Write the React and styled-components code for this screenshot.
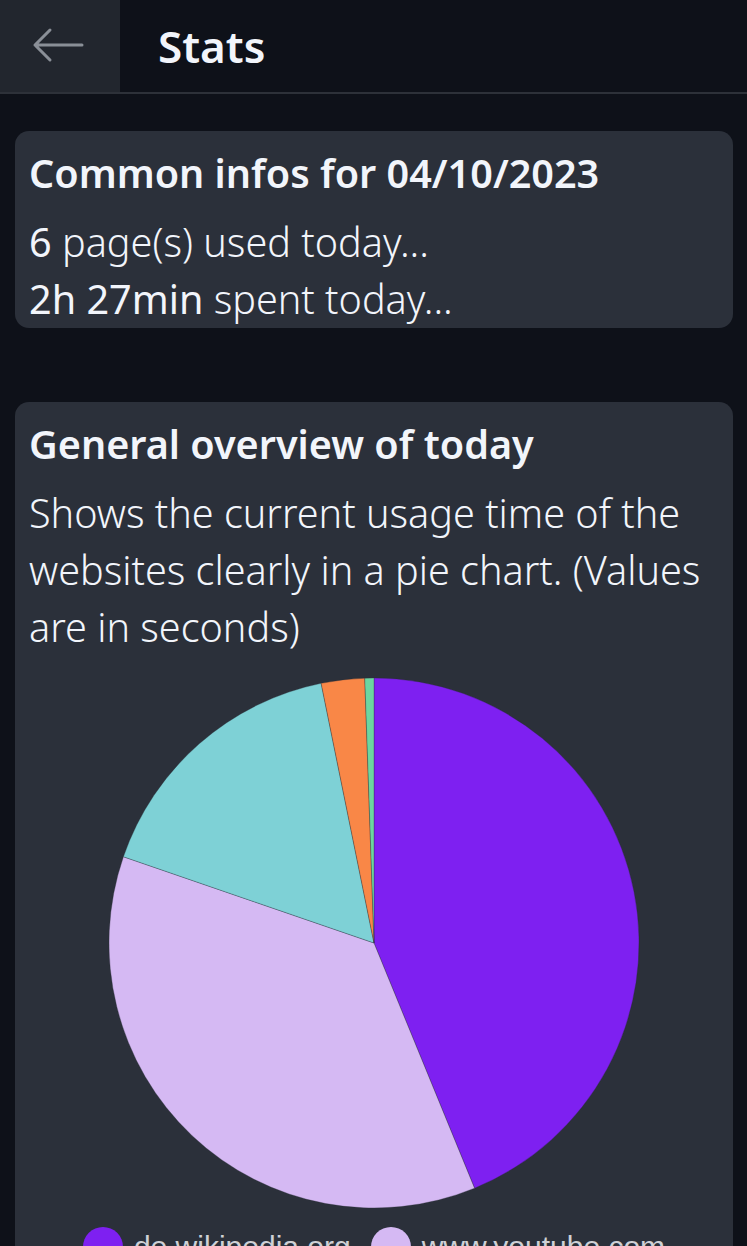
import React from 'react';
import styled, { createGlobalStyle } from 'styled-components';

const pages = [
  { name: 'de.wikipedia.org', seconds: 3864, color: '#7e20f1' },
  { name: 'www.youtube.com', seconds: 3217, color: '#d5b9f3' },
  { name: 'github.com', seconds: 1458, color: '#7ed1d6' },
  { name: 'stackoverflow.com', seconds: 233, color: '#f98747' },
  { name: 'www.google.com', seconds: 49, color: '#6cd6a1' },
];

const GlobalStyle = createGlobalStyle`
  html, body {
    margin: 0;
    padding: 0;
    background: #0e1119;
  }
  body {
    font-family: 'Noto Sans', 'Open Sans', sans-serif;
    color: #f2f5fb;
  }
`;

const slicePath = (cx, cy, r, a0, a1) => {
  const p = (a) => [cx + r * Math.sin(a), cy - r * Math.cos(a)];
  const [x0, y0] = p(a0);
  const [x1, y1] = p(a1);
  const large = a1 - a0 > Math.PI ? 1 : 0;
  return `M${cx},${cy} L${x0},${y0} A${r},${r} 0 ${large} 1 ${x1},${y1} Z`;
};

const PieChart = ({ data }) => {
  const total = data.reduce((s, d) => s + d.seconds, 0);
  let angle = 0;
  return (
    <svg width="532" height="532" viewBox="0 0 532 532">
      {data.map((d) => {
        const start = angle;
        angle += (d.seconds / total) * Math.PI * 2;
        return (
          <path
            key={d.name}
            d={slicePath(266, 266, 265, start, angle)}
            fill={d.color}
            stroke="rgba(40,44,52,0.3)"
            strokeWidth="1"
          />
        );
      })}
    </svg>
  );
};

const App = () => {
  return (
    <>
      <GlobalStyle />
      <Header>
        <BackButton aria-label="back">
          <svg width="56" height="36" viewBox="0 0 56 36" fill="none">
            <path
              d="M50 18 H3 M18 3 L3 18 L18 33"
              stroke="#8a8f97"
              strokeWidth="3"
              strokeLinecap="round"
              strokeLinejoin="round"
            />
          </svg>
        </BackButton>
        <Title>Stats</Title>
      </Header>
      <Main>
        <Card>
          <CardTitle>Common infos for 04/10/2023</CardTitle>
          <Text>
            <Strong>6</Strong> page(s) used today...
            <br />
            <Strong>2h 27min</Strong> spent today...
          </Text>
        </Card>
        <Card>
          <CardTitle>General overview of today</CardTitle>
          <Text>
            Shows the current usage time of the websites clearly in a pie chart. (Values are in seconds)
          </Text>
          <ChartWrap>
            <PieChart data={pages} />
          </ChartWrap>
          <Legend>
            {pages.slice(0, 2).map((p) => (
              <LegendItem key={p.name}>
                <Dot color={p.color} />
                {p.name}
              </LegendItem>
            ))}
          </Legend>
        </Card>
      </Main>
    </>
  );
};

export default App;

const Header = styled.header`
  display: flex;
  align-items: stretch;
  height: 92px;
  background: #0e1119;
  border-bottom: 2px solid #2d3139;
`;

const BackButton = styled.button`
  width: 120px;
  border: none;
  padding: 0 0 2px;
  background: #22262e;
  display: flex;
  align-items: center;
  justify-content: center;
  cursor: pointer;
`;

const Title = styled.h1`
  margin: 0 0 0 38px;
  align-self: center;
  font-size: 44px;
  font-weight: 600;
  color: #f2f5fb;
`;

const Main = styled.main`
  display: flex;
  flex-direction: column;
  gap: 74px;
  padding: 37px 14px 0 15px;
`;

const Card = styled.section`
  background: #2b303a;
  border-radius: 14px;
  padding: 14px 14px 0;
  overflow: hidden;
`;

const CardTitle = styled.h2`
  margin: 0 0 12px;
  font-size: 39.6px;
  line-height: 57px;
  font-weight: 600;
`;

const Text = styled.p`
  margin: 0;
  font-size: 39.6px;
  line-height: 57px;
  font-weight: 300;
`;

const Strong = styled.span`
  font-weight: 400;
`;

const ChartWrap = styled.div`
  display: flex;
  justify-content: center;
  margin-top: 21px;
`;

const Legend = styled.div`
  display: flex;
  flex-wrap: wrap;
  justify-content: center;
  gap: 20px;
  margin-top: 18px;
`;

const LegendItem = styled.div`
  display: flex;
  align-items: center;
  gap: 11px;
  font-family: 'Liberation Sans', Arial, sans-serif;
  font-size: 30px;
  line-height: 40px;
  color: #cfd1d6;
`;

const Dot = styled.span`
  width: 40px;
  height: 40px;
  border-radius: 50%;
  background: ${(p) => p.color};
`;
